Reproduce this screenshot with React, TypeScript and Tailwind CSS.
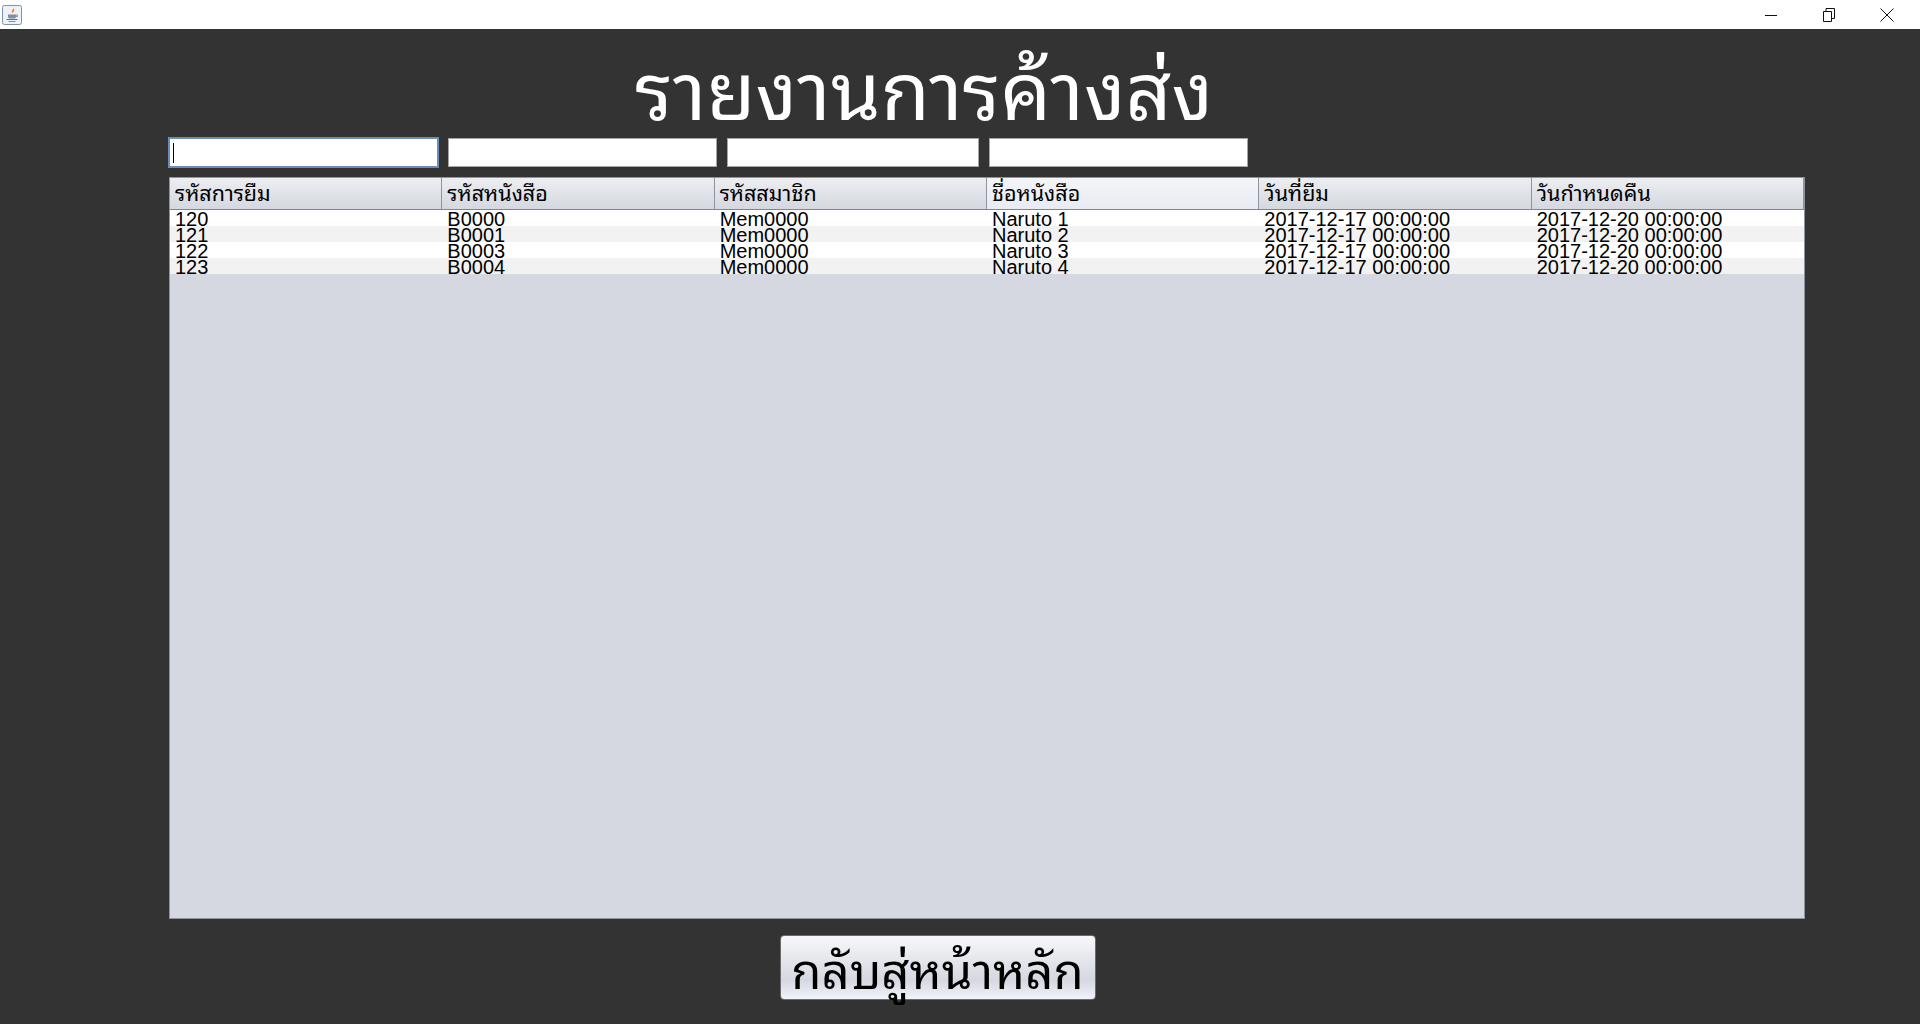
const thai = "font-['Tahoma','Noto_Sans_Thai_Looped','Loma','Garuda','Waree','Noto_Sans_Thai','Noto_Sans','DejaVu_Sans','Liberation_Sans',sans-serif]";

const columns = ["รหัสการยืม", "รหัสหนังสือ", "รหัสสมาชิก", "ชื่อหนังสือ", "วันที่ยืม", "วันกำหนดคืน"];

const rows = [
	["120", "B0000", "Mem0000", "Naruto 1", "2017-12-17 00:00:00", "2017-12-20 00:00:00"],
	["121", "B0001", "Mem0000", "Naruto 2", "2017-12-17 00:00:00", "2017-12-20 00:00:00"],
	["122", "B0003", "Mem0000", "Naruto 3", "2017-12-17 00:00:00", "2017-12-20 00:00:00"],
	["123", "B0004", "Mem0000", "Naruto 4", "2017-12-17 00:00:00", "2017-12-20 00:00:00"],
];

function JavaIcon() {
	return (
		<svg width="20" height="20" viewBox="0 0 20 20" fill="none">
			<rect x="0.5" y="0.5" width="19" height="19" rx="2" fill="#eef1f5" stroke="#7d93a8" />
			<path d="M11 2.500c1.200 1.800-2.500 3-.8 5.800 .3-1.300 3.300-2 1.600-4.300z" fill="#e8863a" />
			<path d="M6 9.500h8v2.200c0 1.200-1 1.800-2 1.800H8c-1 0-2-.6-2-1.800z" fill="#7d90a3" />
			<path d="M14 10h1.500v1.500H14" stroke="#7d90a3" />
			<path d="M4.500 14.500h11" stroke="#5d7286" />
			<path d="M6.500 16.500h7" stroke="#7d90a3" />
		</svg>
	);
}

export default function App() {
	return (
		<div className="w-[1920px] h-[1024px] flex flex-col bg-[#333333] overflow-hidden font-['Liberation_Sans',sans-serif]">
			{/* Title bar */}
			<div className="h-[29px] bg-white flex items-center justify-between shrink-0">
				<div className="pl-[2px]">
					<JavaIcon />
				</div>
				<div className="flex items-center text-black pr-[4px]">
					<div className="w-[58px] flex justify-center">
						<svg width="12" height="12" viewBox="0 0 12 12" stroke="#111" fill="none">
							<path d="M0 6.500h12" />
						</svg>
					</div>
					<div className="w-[58px] flex justify-center">
						<svg width="12" height="14" viewBox="0 0 12 14" stroke="#111" fill="none">
							<path d="M.5 3.500h8v10h-8z" />
							<path d="M3 3.500V.5h8.500v10H8.500" />
						</svg>
					</div>
					<div className="w-[58px] flex justify-center">
						<svg width="14" height="14" viewBox="0 0 14 14" stroke="#111" fill="none">
							<path d="M.5.5l13 13M13.500.5l-13 13" />
						</svg>
					</div>
				</div>
			</div>

			<div className="flex-1 flex flex-col pl-[168px] pr-[114px]">
				{/* Heading */}
				<div className="h-[108px] flex items-center justify-center pr-[126px] pt-[2px]">
					<h1 className={`text-white text-[80px] leading-none whitespace-nowrap ${thai}`}>รายงานการค้างส่ง</h1>
				</div>

				{/* Filters */}
				<div className="h-[31px] flex items-center">
					<div className="w-[271px] h-[31px] bg-white border-2 border-[#6a8fb5] flex items-center pl-[3px]">
						<div className="w-px h-[20px] bg-black" />
					</div>
					<input className="ml-[9px] w-[269px] h-[29px] bg-white border border-[#a5a5a5]" />
					<input className="ml-[10px] w-[252px] h-[29px] bg-white border border-[#a5a5a5]" />
					<input className="ml-[10px] w-[259px] h-[29px] bg-white border border-[#a5a5a5]" />
				</div>

				{/* Table */}
				<div className="mt-[9px] ml-px w-[1636px] h-[742px] bg-[#d5d8e1] border border-[#8e93a0] overflow-hidden">
					<div className="grid grid-cols-6 h-[32px] border-b border-[#7f8590]">
						{columns.map((col, i) => (
							<div
								key={col}
								className={`flex items-center pl-[5px] pb-[2px] text-[21.5px] text-black border-r border-[#8e93a0] overflow-hidden whitespace-nowrap ${thai} ${
									i === 3
										? "bg-gradient-to-b from-[#f4f5f8] to-[#e8ebf2]"
										: "bg-gradient-to-b from-[#eceef1] to-[#d5d8e0]"
								}`}
							>
								{col}
							</div>
						))}
					</div>
					{rows.map((row, r) => (
						<div key={row[0]} className={`grid grid-cols-6 h-[16px] ${r % 2 === 0 ? "bg-white" : "bg-[#f2f2f2]"}`}>
							{row.map((cell, c) => (
								<div key={c} className="pl-[5px] h-[16px] overflow-hidden whitespace-nowrap text-[20px] leading-[16px] text-black">
									<span className="block translate-y-[1px]">{cell}</span>
								</div>
							))}
						</div>
					))}
				</div>

				{/* Back button */}
				<div className="mt-[16px] flex justify-center pr-[99px]">
					<button className={`w-[316px] h-[65px] rounded-[4px] border border-[#6a6a6a] bg-gradient-to-b from-[#f7f8fa] from-0% via-[#d5d8e1] via-70% to-[#f0f3fa] to-100% text-black text-[49px] leading-none whitespace-nowrap ${thai}`}>
						กลับสู่หน้าหลัก
					</button>
				</div>
			</div>
		</div>
	);
}
